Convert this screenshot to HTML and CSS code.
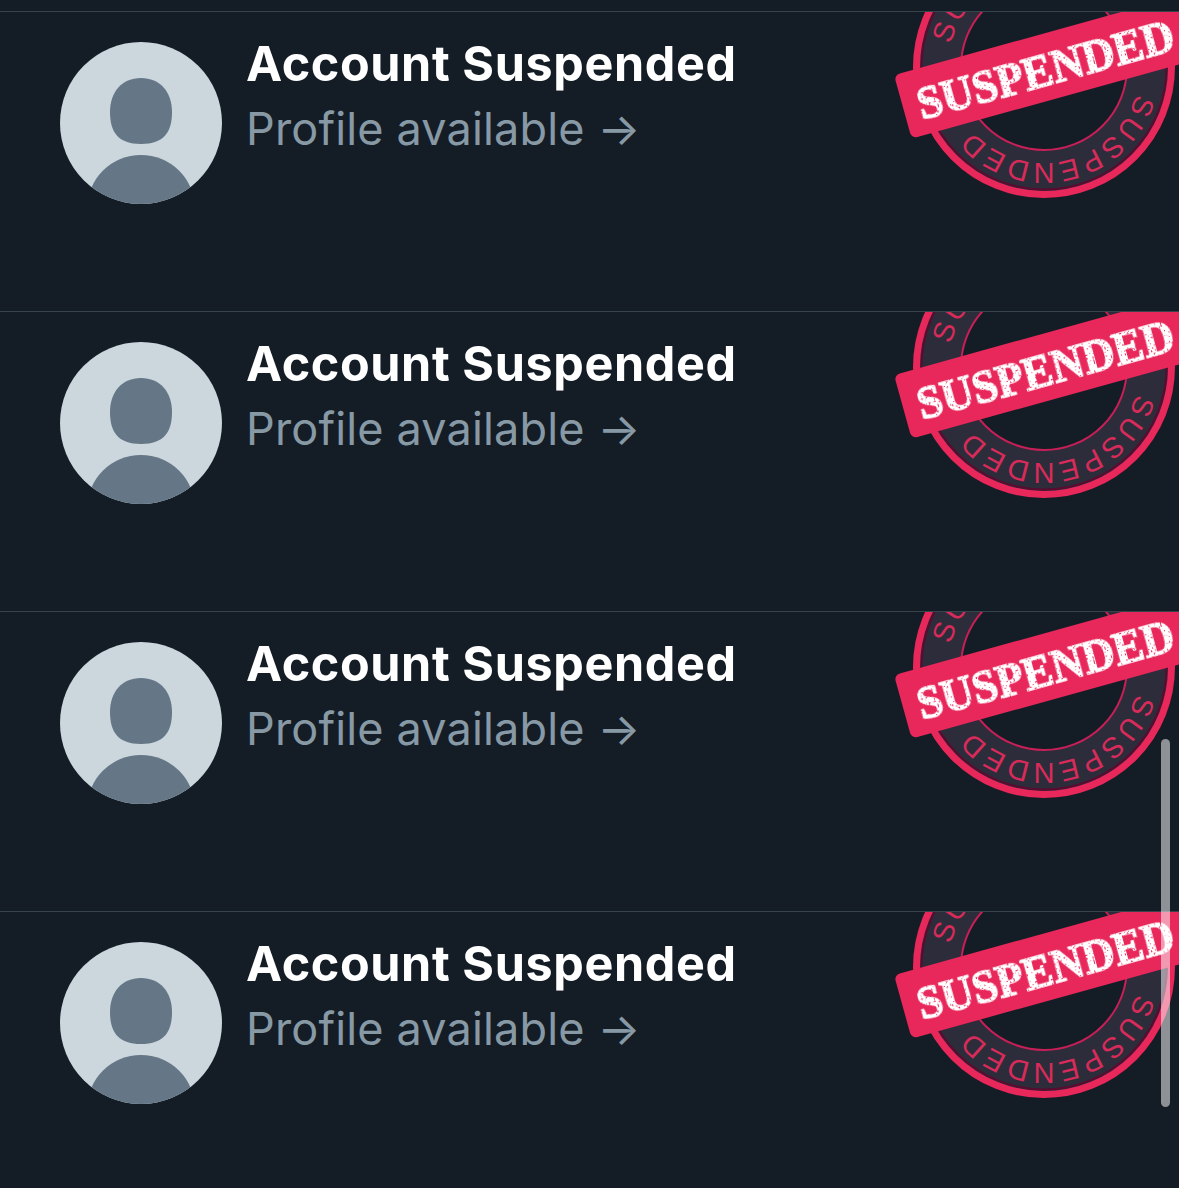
FILE: index.html
```html
<!DOCTYPE html>
<html lang="en">
<head>
<meta charset="utf-8">
<title>Suspended accounts</title>
<link rel="stylesheet" href="styles.css">
</head>
<body>
<svg class="defs" width="0" height="0" aria-hidden="true">
  <defs>
    <path id="ring-path" d="M1140 67A96 96 0 1 1 948 67A96 96 0 1 1 1140 67"/>
    <clipPath id="avatar-clip"><circle cx="81" cy="81" r="81"/></clipPath>
    <filter id="distress" x="-5%" y="-20%" width="110%" height="140%">
      <feTurbulence type="fractalNoise" baseFrequency="0.5" numOctaves="2" seed="4" result="noise"/>
      <feColorMatrix in="noise" type="matrix" values="0 0 0 0 0 0 0 0 0 0 0 0 0 0 0 0 0 0 -9 6.6" result="mask"/>
      <feComposite in="SourceGraphic" in2="mask" operator="in"/>
    </filter>
    <g id="avatar-art">
      <circle cx="81" cy="81" r="81" fill="#ccd6dd"/>
      <path fill="#657786" d="M81 36C100 36 112 50 112 70C112 90 104 102 81 102C58 102 50 90 50 70C50 50 62 36 81 36Z"/>
      <g clip-path="url(#avatar-clip)"><circle cx="81" cy="167" r="54" fill="#657786"/></g>
    </g>
  </defs>
</svg>
<main class="list">
  <article class="row">
    <svg class="avatar" viewBox="0 0 162 162"><use href="#avatar-art"/></svg>
    <div class="copy"><h2 class="name">Account Suspended</h2><p class="sub">Profile available →</p></div>
    <svg class="stamp" viewBox="889 12 290 299">
      <circle cx="1044" cy="67" r="127.5" class="ring-outer"/>
      <circle cx="1044" cy="67" r="122.5" class="ring-line"/>
      <circle cx="1044" cy="67" r="83" class="ring-hole"/>
      <text class="ring-text"><textPath href="#ring-path" startOffset="27" textLength="204">SUSPENDED</textPath></text>
      <text class="ring-text"><textPath href="#ring-path" startOffset="324" textLength="204">SUSPENDED</textPath></text>
      <g transform="translate(894 75) rotate(-15.5)">
        <rect width="320" height="66" rx="6" class="band"/>
        <text x="15" y="51" textLength="265" lengthAdjust="spacingAndGlyphs" class="band-text">SUSPENDED</text>
      </g>
    </svg>
  </article>
  <article class="row">
    <svg class="avatar" viewBox="0 0 162 162"><use href="#avatar-art"/></svg>
    <div class="copy"><h2 class="name">Account Suspended</h2><p class="sub">Profile available →</p></div>
    <svg class="stamp" viewBox="889 12 290 299">
      <circle cx="1044" cy="67" r="127.5" class="ring-outer"/>
      <circle cx="1044" cy="67" r="122.5" class="ring-line"/>
      <circle cx="1044" cy="67" r="83" class="ring-hole"/>
      <text class="ring-text"><textPath href="#ring-path" startOffset="27" textLength="204">SUSPENDED</textPath></text>
      <text class="ring-text"><textPath href="#ring-path" startOffset="324" textLength="204">SUSPENDED</textPath></text>
      <g transform="translate(894 75) rotate(-15.5)">
        <rect width="320" height="66" rx="6" class="band"/>
        <text x="15" y="51" textLength="265" lengthAdjust="spacingAndGlyphs" class="band-text">SUSPENDED</text>
      </g>
    </svg>
  </article>
  <article class="row">
    <svg class="avatar" viewBox="0 0 162 162"><use href="#avatar-art"/></svg>
    <div class="copy"><h2 class="name">Account Suspended</h2><p class="sub">Profile available →</p></div>
    <svg class="stamp" viewBox="889 12 290 299">
      <circle cx="1044" cy="67" r="127.5" class="ring-outer"/>
      <circle cx="1044" cy="67" r="122.5" class="ring-line"/>
      <circle cx="1044" cy="67" r="83" class="ring-hole"/>
      <text class="ring-text"><textPath href="#ring-path" startOffset="27" textLength="204">SUSPENDED</textPath></text>
      <text class="ring-text"><textPath href="#ring-path" startOffset="324" textLength="204">SUSPENDED</textPath></text>
      <g transform="translate(894 75) rotate(-15.5)">
        <rect width="320" height="66" rx="6" class="band"/>
        <text x="15" y="51" textLength="265" lengthAdjust="spacingAndGlyphs" class="band-text">SUSPENDED</text>
      </g>
    </svg>
  </article>
  <article class="row">
    <svg class="avatar" viewBox="0 0 162 162"><use href="#avatar-art"/></svg>
    <div class="copy"><h2 class="name">Account Suspended</h2><p class="sub">Profile available →</p></div>
    <svg class="stamp" viewBox="889 12 290 299">
      <circle cx="1044" cy="67" r="127.5" class="ring-outer"/>
      <circle cx="1044" cy="67" r="122.5" class="ring-line"/>
      <circle cx="1044" cy="67" r="83" class="ring-hole"/>
      <text class="ring-text"><textPath href="#ring-path" startOffset="27" textLength="204">SUSPENDED</textPath></text>
      <text class="ring-text"><textPath href="#ring-path" startOffset="324" textLength="204">SUSPENDED</textPath></text>
      <g transform="translate(894 75) rotate(-15.5)">
        <rect width="320" height="66" rx="6" class="band"/>
        <text x="15" y="51" textLength="265" lengthAdjust="spacingAndGlyphs" class="band-text">SUSPENDED</text>
      </g>
    </svg>
  </article>
</main>
<div class="scrollbar"></div>
</body>
</html>
```
FILE: styles.css
```css
html, body {
  margin: 0;
  height: 1188px;
  overflow: hidden;
  background: #141d26;
}
body {
  position: relative;
  font-family: Inter, "Liberation Sans", sans-serif;
}
.defs {
  position: absolute;
}
.list {
  padding-top: 11px;
}
.row {
  display: flex;
  align-items: flex-start;
  height: 299px;
  border-top: 1px solid #38444d;
  padding-left: 60px;
}
.avatar {
  flex: none;
  width: 162px;
  height: 162px;
  margin-top: 30px;
  margin-right: 24px;
}
.copy {
  padding-top: 22px;
}
.name {
  margin: 0;
  font-size: 48.5px;
  font-weight: 700;
  letter-spacing: 0.6px;
  line-height: 60px;
  color: #fff;
  white-space: nowrap;
}
.sub {
  margin: 5px 0 0;
  font-size: 45px;
  font-weight: 400;
  letter-spacing: 0.16px;
  line-height: 60px;
  color: #8899a6;
  white-space: nowrap;
}
.stamp {
  flex: none;
  width: 290px;
  height: 299px;
  margin-left: auto;
}
.ring-outer {
  fill: #2d2c3b;
  stroke: #e8275a;
  stroke-width: 7;
}
.ring-line {
  fill: none;
  stroke: #5b0b30;
  stroke-width: 2;
}
.ring-hole {
  fill: #141d26;
  stroke: #c81f57;
  stroke-width: 2;
}
.ring-text {
  font-family: "Liberation Sans", sans-serif;
  font-size: 29px;
  fill: #d92b5a;
}
.band {
  fill: #e8275a;
}
.band-text {
  font-family: "Liberation Serif", serif;
  font-size: 47px;
  font-weight: 700;
  fill: #fff;
  stroke: #fff;
  stroke-width: 1.4;
  filter: url(#distress);
}
.scrollbar {
  position: absolute;
  left: 1161px;
  top: 739px;
  width: 9px;
  height: 368px;
  border-radius: 5px;
  background: rgba(255, 255, 255, 0.52);
}
```
